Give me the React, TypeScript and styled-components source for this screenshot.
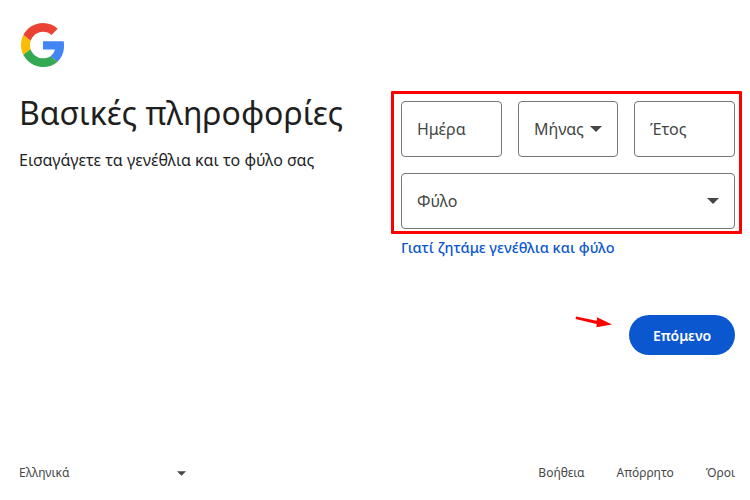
import styled, { createGlobalStyle } from "styled-components";

const GlobalStyle = createGlobalStyle`
  html, body {
    margin: 0;
    padding: 0;
    background: #fff;
  }
  body {
    font-family: "Noto Sans", "Open Sans", sans-serif;
    color: #1f1f1f;
  }
`;

const GoogleLogo = () => (
  <LogoSvg viewBox="0 0 48 48">
    <path fill="#EA4335" d="M24 9.5c3.54 0 6.71 1.22 9.21 3.6l6.85-6.85C35.9 2.38 30.47 0 24 0 14.62 0 6.51 5.38 2.56 13.22l7.98 6.19C12.43 13.72 17.74 9.5 24 9.5z" />
    <path fill="#4285F4" d="M46.98 24.55c0-1.57-.15-3.09-.38-4.55H24v9.02h12.94c-.58 2.96-2.26 5.48-4.78 7.18l7.73 6c4.51-4.18 7.09-10.36 7.09-17.65z" />
    <path fill="#FBBC05" d="M10.53 28.59c-.48-1.45-.76-2.99-.76-4.59s.27-3.14.76-4.59l-7.98-6.19C.92 16.46 0 20.12 0 24c0 3.88.92 7.54 2.56 10.78l7.97-6.19z" />
    <path fill="#34A853" d="M24 48c6.48 0 11.93-2.13 15.89-5.81l-7.73-6c-2.15 1.45-4.92 2.3-8.16 2.3-6.26 0-11.57-4.22-13.47-9.91l-7.98 6.19C6.51 42.62 14.62 48 24 48z" />
  </LogoSvg>
);

const Caret = ({ small }: { small?: boolean }) => (
  <CaretSvg $small={small} viewBox="0 0 12 6">
    <path d="M0 0h12L6 6z" fill="currentColor" />
  </CaretSvg>
);

export default function App() {
  return (
    <Page>
      <GlobalStyle />
      <GoogleLogo />
      <Main>
        <Intro>
          <Title>Βασικές πληροφορίες</Title>
          <Subtitle>Εισαγάγετε τα γενέθλια και το φύλο σας</Subtitle>
        </Intro>
        <FormColumn>
          <Highlight>
            <DateRow>
              <Field>Ημέρα</Field>
              <Field $select>
                Μήνας
                <Caret />
              </Field>
              <Field>Έτος</Field>
            </DateRow>
            <Field $select>
              Φύλο
              <Caret />
            </Field>
          </Highlight>
          <WhyLink href="#">Γιατί ζητάμε γενέθλια και φύλο</WhyLink>
          <Actions>
            <Arrow viewBox="0 0 38 14">
              <path d="M1 0.6 L24 5.2 L23.6 8.4 L0.6 3 Z" fill="#f00" />
              <path d="M22 1.2 L37 8.6 L21.5 11.2 Z" fill="#f00" />
            </Arrow>
            <NextButton>Επόμενο</NextButton>
          </Actions>
        </FormColumn>
      </Main>
      <Footer>
        <Language>
          Ελληνικά
          <Caret small />
        </Language>
        <FooterLinks>
          <FooterLink href="#">Βοήθεια</FooterLink>
          <FooterLink href="#">Απόρρητο</FooterLink>
          <FooterLink href="#">Όροι</FooterLink>
        </FooterLinks>
      </Footer>
    </Page>
  );
}

const Page = styled.div`
  width: 750px;
  height: 500px;
  overflow: hidden;
  display: flex;
  flex-direction: column;
  padding-top: 23px;
  box-sizing: border-box;
`;

const LogoSvg = styled.svg`
  width: 44px;
  height: 44px;
  margin-left: 21px;
  flex: none;
`;

const Main = styled.div`
  display: flex;
  justify-content: space-between;
  margin-top: 24px;
  padding: 0 8px 0 19px;
  flex: 1;
`;

const Intro = styled.div`
  display: flex;
  flex-direction: column;
`;

const Title = styled.h1`
  margin: 0;
  padding-top: 2px;
  font-size: 32px;
  line-height: 40px;
  font-weight: 400;
  color: #1f1f1f;
`;

const Subtitle = styled.p`
  margin: 16px 0 0;
  font-size: 16px;
  line-height: 22px;
  color: #1f1f1f;
`;

const FormColumn = styled.div`
  width: 351px;
  display: flex;
  flex-direction: column;
`;

const Highlight = styled.div`
  box-sizing: border-box;
  width: 351px;
  height: 143px;
  border: 3px solid #f00;
  border-radius: 1px;
  padding: 7px 4px 2px 7px;
  display: flex;
  flex-direction: column;
  gap: 16px;
`;

const DateRow = styled.div`
  display: grid;
  grid-template-columns: 101px 100px 101px;
  justify-content: space-between;
`;

const Field = styled.div<{ $select?: boolean }>`
  box-sizing: border-box;
  height: 56px;
  flex: none;
  border: 1px solid #747775;
  border-radius: 4px;
  padding: 0 15px;
  display: flex;
  align-items: center;
  justify-content: ${(p) => (p.$select ? "space-between" : "flex-start")};
  font-size: 16px;
  color: #444746;
`;

const CaretSvg = styled.svg<{ $small?: boolean }>`
  width: ${(p) => (p.$small ? "9px" : "12px")};
  height: ${(p) => (p.$small ? "5px" : "6px")};
  color: #444746;
  flex: none;
`;

const WhyLink = styled.a`
  margin: 3px 0 0 10px;
  font-size: 14.5px;
  line-height: 20px;
  font-weight: 500;
  color: #0b57d0;
  text-decoration: none;
`;

const Actions = styled.div`
  display: flex;
  align-items: flex-start;
  justify-content: flex-end;
  gap: 16px;
  margin-top: 58px;
  padding-right: 7px;
`;

const Arrow = styled.svg`
  width: 38px;
  height: 14px;
  margin-top: 1px;
`;

const NextButton = styled.button`
  width: 106px;
  height: 40px;
  border: none;
  border-radius: 20px;
  background: #0b57d0;
  color: #fff;
  font-family: inherit;
  font-size: 14px;
  font-weight: 600;
`;

const Footer = styled.div`
  display: flex;
  justify-content: space-between;
  align-items: center;
  padding: 0 15px 18px 19px;
  font-size: 12px;
  line-height: 18px;
  color: #444746;
`;

const Language = styled.div`
  width: 167px;
  display: flex;
  justify-content: space-between;
  align-items: center;
`;

const FooterLinks = styled.div`
  display: flex;
  gap: 32px;
`;

const FooterLink = styled.a`
  color: #444746;
  text-decoration: none;
`;
